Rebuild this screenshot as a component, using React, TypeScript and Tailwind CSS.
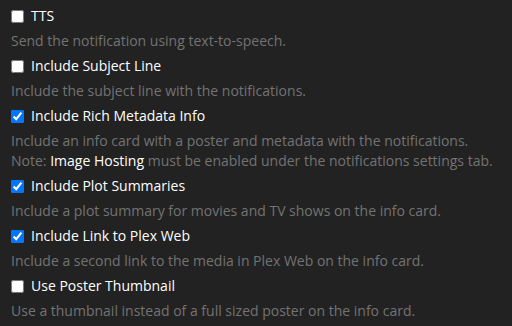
import React from 'react';

type Option = {
    id: string;
    label: string;
    checked: boolean;
    help: React.ReactNode;
};

const options: Option[] = [
    { id: 'tts', label: 'TTS', checked: false, help: 'Send the notification using text-to-speech.' },
    { id: 'subject', label: 'Include Subject Line', checked: false, help: 'Include the subject line with the notifications.' },
    {
        id: 'rich',
        label: 'Include Rich Metadata Info',
        checked: true,
        help: (
            <>
                Include an info card with a poster and metadata with the notifications.
                <br />
                Note: <span className="text-white">Image Hosting</span> must be enabled under the notifications settings tab.
            </>
        ),
    },
    { id: 'plot', label: 'Include Plot Summaries', checked: true, help: 'Include a plot summary for movies and TV shows on the info card.' },
    { id: 'link', label: 'Include Link to Plex Web', checked: true, help: 'Include a second link to the media in Plex Web on the info card.' },
    { id: 'thumb', label: 'Use Poster Thumbnail', checked: false, help: 'Use a thumbnail instead of a full sized poster on the info card.' },
];

export default function App() {
    return (
        <div
            className="min-h-screen bg-[#222222] px-[11px] pt-[6px]"
            style={{ fontFamily: '"Open Sans", "Liberation Sans", sans-serif' }}
        >
            {options.map(opt => (
                <div key={opt.id} className="mb-[5px]">
                    <label htmlFor={opt.id} className="flex items-start gap-[7px] h-5 text-[14px] leading-5 text-white">
                        <input
                            id={opt.id}
                            type="checkbox"
                            defaultChecked={opt.checked}
                            className="m-0 mt-[4px] w-[13px] h-[13px] shrink-0"
                        />
                        <span>{opt.label}</span>
                    </label>
                    <p className="mt-[5px] text-[14px] leading-5 text-[#737373]">{opt.help}</p>
                </div>
            ))}
        </div>
    );
}
